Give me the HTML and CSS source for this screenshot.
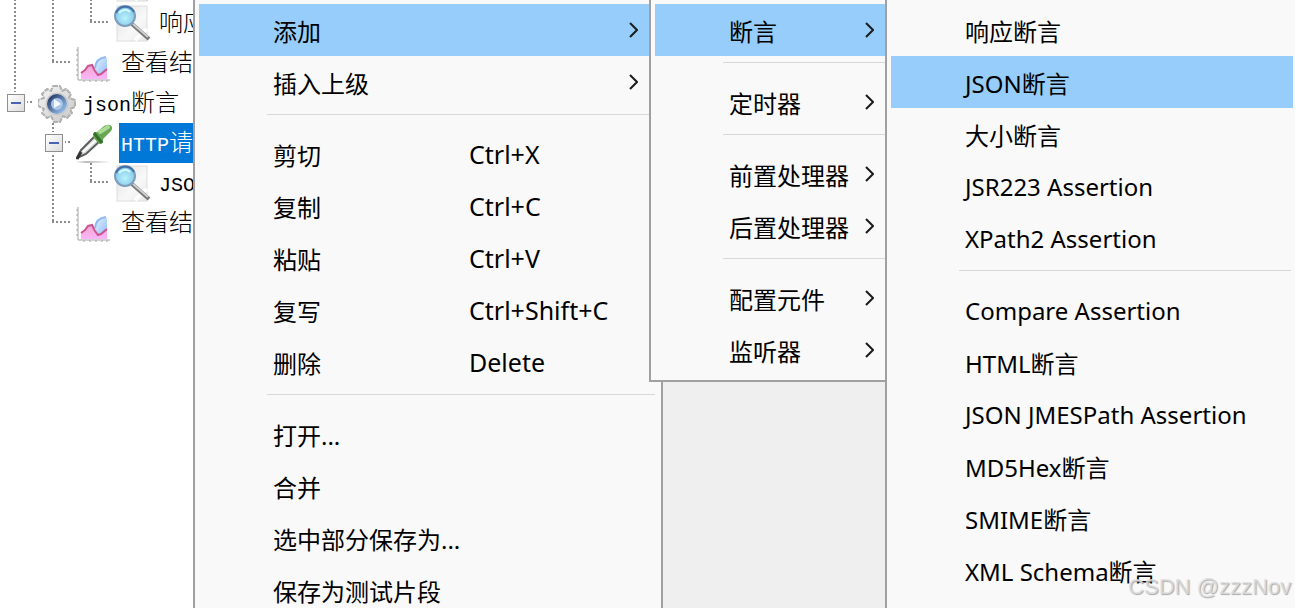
FILE: index.html
```html
<!DOCTYPE html>
<html lang="zh-CN">
<head>
    <meta charset="UTF-8">
    <meta name="viewport" content="width=device-width, initial-scale=1.0">
    <title>JMeter</title>
    <link rel="stylesheet" href="styles.css">
</head>
<body>
    <!-- Shared icons -->
    <svg class="sprite" aria-hidden="true">
        <defs>
            <linearGradient id="paper" x1="0" y1="0" x2="1" y2="1">
                <stop offset="0" stop-color="#e2e2e2"/>
                <stop offset="0.6" stop-color="#f8f8f8"/>
                <stop offset="1" stop-color="#e6e6e6"/>
            </linearGradient>
            <radialGradient id="lens" cx="0.5" cy="0.6" r="0.6">
                <stop offset="0" stop-color="#b9f2fb"/>
                <stop offset="1" stop-color="#7cc4e8"/>
            </radialGradient>
            <linearGradient id="steel" x1="0" y1="0" x2="1" y2="1">
                <stop offset="0" stop-color="#f4f4f4"/>
                <stop offset="1" stop-color="#c8c8c8"/>
            </linearGradient>
            <linearGradient id="core" x1="0" y1="0" x2="1" y2="1">
                <stop offset="0" stop-color="#1d3768"/>
                <stop offset="1" stop-color="#9fc4f0"/>
            </linearGradient>
            <linearGradient id="bubble" x1="0" y1="0" x2="1" y2="1">
                <stop offset="0" stop-color="#e6f2ff"/>
                <stop offset="1" stop-color="#8dbcf8"/>
            </linearGradient>
            <linearGradient id="area" x1="0" y1="0" x2="0" y2="1">
                <stop offset="0" stop-color="#f3a6cf"/>
                <stop offset="1" stop-color="#fbb4fa"/>
            </linearGradient>
            <linearGradient id="shade" x1="0" x2="1">
                <stop offset="0" stop-color="#fff"/>
                <stop offset="0.3" stop-color="#bbb"/>
                <stop offset="1" stop-color="#fff"/>
            </linearGradient>
        </defs>
        <symbol id="icon-search" viewBox="0 0 38 40">
            <rect x="3" y="3" width="30" height="35" fill="url(#paper)" stroke="#dedede"/>
            <path d="M21 37L33 26" stroke="#fff" stroke-width="4"/>
            <path d="M18 21L35 36" stroke="#777" stroke-width="4"/>
            <path d="M19 21L34 34" stroke="#cfcfcf" stroke-width="2"/>
            <circle cx="11" cy="13" r="10" fill="url(#lens)" stroke="#7f9cbd" stroke-width="2"/>
            <path d="M2 10A10 10 0 0 1 20 9" fill="none" stroke="#4470a8" stroke-width="2"/>
            <path d="M5 10Q11 4 16 9" fill="none" stroke="#d7f8ff" stroke-width="2"/>
        </symbol>
        <symbol id="icon-chart" viewBox="0 0 38 40">
            <path d="M2 4V37H34M0 7H2M0 12H2M0 17H2M0 22H2M0 27H2M0 32H2M8 37V39M14 37V39M20 37V39M26 37V39M31 37V39" fill="none" stroke="#a5a5a5"/>
            <path d="M31 15Q21 14 19 25Q20 31 25 32L31 27Z" fill="url(#bubble)"/>
            <path d="M30 14Q20 15 19 25" fill="none" stroke="#8fb8f5" stroke-width="2"/>
            <path d="M5 36V30L9 27L12 23L16 22L19 28L22 32L25 31L31 26V36Z" fill="url(#area)"/>
            <path d="M5 30L9 27L12 23L16 22L19 28L22 32L25 31L31 26" fill="none" stroke="#c9558f" stroke-width="2"/>
        </symbol>
        <symbol id="icon-gear" viewBox="0 0 38 40">
            <path d="M15 3H22L24 8L28 6L33 11L31 15L37 17V24L32 26L34 30L29 35L25 33L22 39H16L13 33L9 35L4 30L6 26L0 23V17L6 15L4 11L9 6L13 8Z" fill="url(#steel)" stroke="#b0b0b0" stroke-width="2" stroke-linejoin="round" stroke-dasharray="5 1"/>
            <circle cx="19" cy="21" r="11" fill="#dadada" stroke="#c4c4c4"/>
            <circle cx="19" cy="21" r="8" fill="#a9c6e8" stroke="url(#core)" stroke-width="4"/>
            <path d="M16 16L23 21L16 25Z" fill="#f4faff"/>
        </symbol>
        <symbol id="icon-dropper" viewBox="0 0 38 40">
            <rect x="0" y="38" width="35" height="2" fill="url(#shade)"/>
            <path d="M1 35L5 27L19 13L24 18L10 31Z" fill="#d9dcdc" stroke="#5c5c5c" stroke-width="2"/>
            <path d="M7 29L20 17" stroke="#fff" stroke-width="2"/>
            <path d="M1 36L5 29" stroke="#333" stroke-width="3"/>
            <path d="M18 9L21 9L28 3Q34 0 36 4Q37 7 32 11L27 16V20L23 21L17 14Z" fill="#67a653"/>
            <path d="M18 10L26 20" stroke="#34702c" stroke-width="3"/>
            <path d="M24 9L32 4" stroke="#acdc94" stroke-width="4" stroke-linecap="round"/>
        </symbol>
        <symbol id="icon-arrow" viewBox="0 0 9 16">
            <path d="M1 1L8 8L1 15" fill="none" stroke="#1c1c1c" stroke-width="2"/>
        </symbol>
    </svg>

    <div class="window">
        <!-- Test plan tree -->
        <ul class="tree">
            <li class="row">
                <span class="guide line"></span><span class="guide line"></span><span class="guide line branch"></span>
                <svg class="icon"><use href="#icon-search"/></svg>
            </li>
            <li class="row">
                <span class="guide line"></span><span class="guide line"></span><span class="guide half branch"></span>
                <svg class="icon"><use href="#icon-search"/></svg>
                <span class="label">响应断言</span>
            </li>
            <li class="row">
                <span class="guide line"></span><span class="guide half branch"></span>
                <svg class="icon"><use href="#icon-chart"/></svg>
                <span class="label">查看结果树</span>
            </li>
            <li class="row">
                <span class="guide half branch"><button class="toggle" aria-label="折叠"></button></span>
                <svg class="icon"><use href="#icon-gear"/></svg>
                <span class="label"><span class="latin">json</span>断言</span>
            </li>
            <li class="row">
                <span class="guide"></span><span class="guide line branch"><button class="toggle" aria-label="折叠"></button></span>
                <svg class="icon"><use href="#icon-dropper"/></svg>
                <span class="label selected"><span class="latin">HTTP</span>请求</span>
            </li>
            <li class="row">
                <span class="guide"></span><span class="guide line"></span><span class="guide half branch"></span>
                <svg class="icon"><use href="#icon-search"/></svg>
                <span class="label"><span class="latin">JSON</span>断言</span>
            </li>
            <li class="row">
                <span class="guide"></span><span class="guide half branch"></span>
                <svg class="icon"><use href="#icon-chart"/></svg>
                <span class="label">查看结果树</span>
            </li>
        </ul>

        <!-- Context menu -->
        <ul class="menu context-menu">
            <li>
                <button class="item active">添加<svg class="arrow"><use href="#icon-arrow"/></svg></button>
                <ul class="menu submenu">
                    <li>
                        <button class="item active">断言<svg class="arrow"><use href="#icon-arrow"/></svg></button>
                        <ul class="menu submenu assertions">
                            <li><button class="item">响应断言</button></li>
                            <li><button class="item active">JSON断言</button></li>
                            <li><button class="item">大小断言</button></li>
                            <li><button class="item">JSR223 Assertion</button></li>
                            <li><button class="item">XPath2 Assertion</button></li>
                            <li class="separator"></li>
                            <li><button class="item">Compare Assertion</button></li>
                            <li><button class="item">HTML断言</button></li>
                            <li><button class="item">JSON JMESPath Assertion</button></li>
                            <li><button class="item">MD5Hex断言</button></li>
                            <li><button class="item">SMIME断言</button></li>
                            <li><button class="item">XML Schema断言</button></li>
                        </ul>
                    </li>
                    <li class="separator"></li>
                    <li><button class="item">定时器<svg class="arrow"><use href="#icon-arrow"/></svg></button></li>
                    <li class="separator"></li>
                    <li><button class="item">前置处理器<svg class="arrow"><use href="#icon-arrow"/></svg></button></li>
                    <li><button class="item">后置处理器<svg class="arrow"><use href="#icon-arrow"/></svg></button></li>
                    <li class="separator"></li>
                    <li><button class="item">配置元件<svg class="arrow"><use href="#icon-arrow"/></svg></button></li>
                    <li><button class="item">监听器<svg class="arrow"><use href="#icon-arrow"/></svg></button></li>
                </ul>
            </li>
            <li><button class="item">插入上级<svg class="arrow"><use href="#icon-arrow"/></svg></button></li>
            <li class="separator"></li>
            <li><button class="item"><span class="name">剪切</span><span class="shortcut">Ctrl+X</span></button></li>
            <li><button class="item"><span class="name">复制</span><span class="shortcut">Ctrl+C</span></button></li>
            <li><button class="item"><span class="name">粘贴</span><span class="shortcut">Ctrl+V</span></button></li>
            <li><button class="item"><span class="name">复写</span><span class="shortcut">Ctrl+Shift+C</span></button></li>
            <li><button class="item"><span class="name">删除</span><span class="shortcut">Delete</span></button></li>
            <li class="separator"></li>
            <li><button class="item">打开...</button></li>
            <li><button class="item">合并</button></li>
            <li><button class="item">选中部分保存为...</button></li>
            <li><button class="item">保存为测试片段</button></li>
        </ul>

        <div class="watermark">CSDN @zzzNov</div>
    </div>
</body>
</html>
```

FILE: styles.css
```css
body {
    margin: 0;
    background-color: #efefef;
    color: #000;
    font-family: "Noto Sans", "Noto Sans CJK SC", sans-serif;
    font-size: 24px;
}
ul {
    list-style: none;
    margin: 0;
    padding: 0;
}
.sprite {
    position: absolute;
    width: 0;
    height: 0;
}
.window {
    position: relative;
    display: flex;
    height: 100vh;
    overflow: hidden;
}

/* Tree */
.tree {
    flex: none;
    box-sizing: border-box;
    width: 193px;
    margin-top: -37px;
    padding-left: 14px;
    background-color: #fff;
    overflow: hidden;
    font-family: "Noto Sans CJK SC", sans-serif;
    font-weight: 300;
}
.row {
    display: flex;
    height: 40px;
    white-space: nowrap;
}
.guide {
    flex: none;
    position: relative;
    display: flex;
    align-items: center;
    width: 38px;
}
.guide.branch {
    width: 24px;
}
.guide.line::before,
.guide.half::before {
    content: "";
    position: absolute;
    left: 0;
    top: 0;
    width: 2px;
    height: 100%;
    background: repeating-linear-gradient(#8c8c8c 0 2px, transparent 2px 4px);
}
.guide.half::before {
    height: 50%;
}
.guide.branch::after {
    content: "";
    position: absolute;
    left: 0;
    bottom: 50%;
    width: 20px;
    height: 2px;
    background: repeating-linear-gradient(90deg, #8c8c8c 0 2px, transparent 2px 4px);
}
.toggle {
    position: relative;
    z-index: 1;
    display: flex;
    align-items: center;
    justify-content: center;
    width: 18px;
    height: 18px;
    margin-left: -7px;
    padding: 0;
    border: 1px solid #8f8f8f;
    background: linear-gradient(135deg, #fff, #dcdcdc);
    outline: 2px solid #fff;
}
.toggle::before {
    content: "";
    width: 10px;
    height: 2px;
    background-color: #4a63b0;
}
.icon {
    flex: none;
    width: 38px;
    height: 40px;
}
.label {
    margin-left: 5px;
    padding: 0 2px;
    line-height: 36px;
}
.label.selected {
    background-color: #0078d7;
    color: #fff;
}
.latin {
    font-family: "Liberation Mono", monospace;
    font-size: 20px;
}

/* Menus */
.menu {
    box-sizing: border-box;
    padding: 4px;
    border: 2px solid #a0a0a0;
    border-top: none;
    background-color: #f9f9f9;
}
.menu li {
    position: relative;
}
.context-menu {
    flex: none;
    width: 470px;
    min-height: 100%;
    border-bottom: none;
}
.submenu {
    position: absolute;
    z-index: 1;
    top: -4px;
    left: calc(100% - 8px);
    width: 250px;
}
.assertions {
    width: 414px;
    height: 100vh;
    border-bottom: none;
}
.item {
    display: flex;
    align-items: center;
    width: 100%;
    height: 52px;
    padding: 0 19px 0 74px;
    border: none;
    background: none;
    color: inherit;
    font: inherit;
    text-align: left;
    white-space: nowrap;
}
.item.active {
    background-color: #96cdfb;
}
.name {
    width: 196px;
}
.shortcut {
    font-size: 25px;
}
.arrow {
    width: 9px;
    height: 16px;
    margin-left: auto;
}
.separator {
    height: 13px;
    margin: 6px 2px 0 68px;
    border-top: 1px solid #d7d7d7;
}

.watermark {
    position: absolute;
    z-index: 2;
    right: 4px;
    bottom: 8px;
    color: rgba(222, 222, 222, 0.8);
    font-family: "Liberation Sans", Arial, sans-serif;
    font-size: 22px;
    text-shadow: 1px 1px 1px #aaa;
}
```
